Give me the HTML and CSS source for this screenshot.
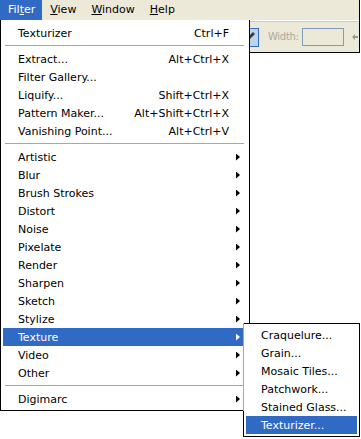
FILE: index.html
```html
<!DOCTYPE html>
<html lang="en">
<head>
    <meta charset="UTF-8">
    <title>Filter menu</title>
    <link rel="stylesheet" href="styles.css">
</head>
<body>
    <div class="window">
        <div class="menubar">
            <span class="menubar-item active">Fil<u>t</u>er</span>
            <span class="menubar-item"><u>V</u>iew</span>
            <span class="menubar-item"><u>W</u>indow</span>
            <span class="menubar-item"><u>H</u>elp</span>
        </div>
        <div class="toolbar">
            <span class="tool-btn">
                <svg width="12" height="12" viewBox="0 0 12 12"><path d="M2 10 L3 7 L9 1 L11 3 L5 9 Z" fill="#3a3a3a"/></svg>
            </span>
            <span class="tool-label">Width:</span>
            <span class="tool-input"></span>
            <span class="tool-grip">
                <svg width="6" height="8" viewBox="0 0 6 8"><path d="M0 4 L3 1 L3 3 L6 3 L6 5 L3 5 L3 7 Z" fill="#9a9a9a"/></svg>
            </span>
        </div>
    </div>

    <div class="menu filter-menu">
        <div class="item"><span class="label">Texturizer</span><span class="key">Ctrl+F</span><span class="sub"></span></div>
        <div class="sep"></div>
        <div class="item"><span class="label">Extract...</span><span class="key">Alt+Ctrl+X</span><span class="sub"></span></div>
        <div class="item"><span class="label">Filter Gallery...</span><span class="sub"></span></div>
        <div class="item"><span class="label">Liquify...</span><span class="key">Shift+Ctrl+X</span><span class="sub"></span></div>
        <div class="item"><span class="label">Pattern Maker...</span><span class="key">Alt+Shift+Ctrl+X</span><span class="sub"></span></div>
        <div class="item"><span class="label">Vanishing Point...</span><span class="key">Alt+Ctrl+V</span><span class="sub"></span></div>
        <div class="sep"></div>
        <div class="item"><span class="label">Artistic</span><span class="sub"><i class="arrow"></i></span></div>
        <div class="item"><span class="label">Blur</span><span class="sub"><i class="arrow"></i></span></div>
        <div class="item"><span class="label">Brush Strokes</span><span class="sub"><i class="arrow"></i></span></div>
        <div class="item"><span class="label">Distort</span><span class="sub"><i class="arrow"></i></span></div>
        <div class="item"><span class="label">Noise</span><span class="sub"><i class="arrow"></i></span></div>
        <div class="item"><span class="label">Pixelate</span><span class="sub"><i class="arrow"></i></span></div>
        <div class="item"><span class="label">Render</span><span class="sub"><i class="arrow"></i></span></div>
        <div class="item"><span class="label">Sharpen</span><span class="sub"><i class="arrow"></i></span></div>
        <div class="item"><span class="label">Sketch</span><span class="sub"><i class="arrow"></i></span></div>
        <div class="item"><span class="label">Stylize</span><span class="sub"><i class="arrow"></i></span></div>
        <div class="item open"><span class="label">Texture</span><span class="sub"><i class="arrow"></i></span>
            <div class="menu submenu">
                <div class="item"><span class="label">Craquelure...</span></div>
                <div class="item"><span class="label">Grain...</span></div>
                <div class="item"><span class="label">Mosaic Tiles...</span></div>
                <div class="item"><span class="label">Patchwork...</span></div>
                <div class="item"><span class="label">Stained Glass...</span></div>
                <div class="item open"><span class="label">Texturizer...</span></div>
            </div>
        </div>
        <div class="item"><span class="label">Video</span><span class="sub"><i class="arrow"></i></span></div>
        <div class="item"><span class="label">Other</span><span class="sub"><i class="arrow"></i></span></div>
        <div class="sep"></div>
        <div class="item"><span class="label">Digimarc</span><span class="sub"><i class="arrow"></i></span></div>
    </div>
</body>
</html>
```

FILE: styles.css
```css
body {
    margin: 0;
    font-family: 'DejaVu Sans', sans-serif;
    font-size: 11px;
    color: #000;
    background-color: white;
}
.window {
    width: 359px;
    border-right: 1px solid #000;
    background-color: #ECE9D8;
}
.menubar {
    display: flex;
    height: 20px;
}
.menubar-item {
    padding: 0 7px 0 8px;
    line-height: 19px;
}
.menubar-item u {
    text-underline-offset: 1px;
}
.menubar-item.active {
    background-color: #316AC5;
    color: white;
}
.toolbar {
    display: flex;
    align-items: center;
    height: 31px;
    padding-left: 241px;
    border-top: 1px solid #fff;
    box-shadow: inset 0 1px 0 #D0CDBC;
    border-bottom: 1px solid #000;
}
.tool-btn {
    display: flex;
    align-items: center;
    justify-content: center;
    width: 16px;
    height: 17px;
    margin-top: 1px;
    border: 1px solid #316AC5;
    background-color: #C1D2EE;
}
.tool-label {
    margin-left: 9px;
    font-size: 10px;
    letter-spacing: -0.3px;
    color: #ACA899;
}
.tool-input {
    width: 40px;
    height: 16px;
    margin-left: 3px;
    border: 1px solid #7F9DB9;
}
.tool-grip {
    margin-left: auto;
    margin-right: 1px;
    display: flex;
}
.menu {
    position: absolute;
    background-color: white;
    border: 1px solid #000;
}
.filter-menu {
    top: 20px;
    left: 0;
    width: 241px;
    padding: 4px 5px 2px 2px;
    border-top: none;
}
.item {
    position: relative;
    display: flex;
    align-items: center;
    height: 18px;
    padding-left: 15px;
    white-space: nowrap;
}
.item .label {
    flex: 1;
}
.item .sub {
    display: flex;
    align-items: center;
    width: 15px;
    height: 18px;
    padding-left: 7px;
    box-sizing: border-box;
}
.arrow {
    display: block;
    width: 4px;
    height: 7px;
    background-color: currentColor;
    clip-path: polygon(0 0, 100% 50%, 0 100%);
}
.item.open {
    background-color: #316AC5;
    color: white;
}
.sep {
    height: 1px;
    margin: 3px 0 4px 2px;
    background-color: #ACA899;
}
.submenu {
    top: -5px;
    left: 240px;
    width: 111px;
    padding: 2px;
    color: #000;
}
.submenu::before {
    content: "";
    position: absolute;
    left: -1px;
    top: -1px;
    width: 1px;
    height: 88px;
    background-color: #ACA899;
}
.submenu .item {
    padding-left: 15px;
}
.submenu .item.open {
    color: white;
}
```
